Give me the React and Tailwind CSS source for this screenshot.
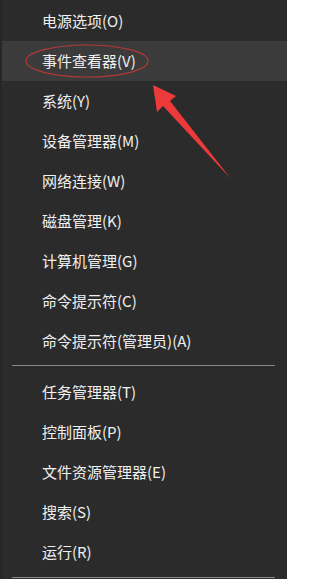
import React from "react";

const group1 = [
  "电源选项(O)",
  "事件查看器(V)",
  "系统(Y)",
  "设备管理器(M)",
  "网络连接(W)",
  "磁盘管理(K)",
  "计算机管理(G)",
  "命令提示符(C)",
  "命令提示符(管理员)(A)",
];
const group2 = [
  "任务管理器(T)",
  "控制面板(P)",
  "文件资源管理器(E)",
  "搜索(S)",
  "运行(R)",
];

function Item({ label, active }) {
  return (
    <div
      className={
        "h-10 flex items-center text-[15px] text-[#f0f0f0] " +
        (active ? "bg-[#3b3b3b] ml-[2px] pl-[40px]" : "pl-[42px]")
      }
    >
      <span>{label}</span>
    </div>
  );
}

export default function App() {
  return (
    <div
      className="relative w-[287px] h-[579px] overflow-hidden bg-[#2b2b2b] pt-[1px]"
      style={{ fontFamily: '"Noto Sans CJK SC", "Noto Sans", sans-serif' }}
    >
      <div className="absolute left-0 top-0 bottom-0 w-[2px] bg-[#262626]" />
      {group1.map((l, i) => (
        <Item key={l} label={l} active={i === 1} />
      ))}
      <div className="mx-[12px] mt-[4px] mb-[6px] h-[1px] bg-[#8a8a8a]" />
      {group2.map((l) => (
        <Item key={l} label={l} />
      ))}
      <div className="mx-[12px] mt-[5px] h-[1px] bg-[#8a8a8a]" />
      <svg
        className="absolute left-0 top-0 pointer-events-none"
        width="287"
        height="579"
        viewBox="0 0 287 579"
      >
        <ellipse
          cx="87"
          cy="61"
          rx="61"
          ry="16"
          fill="none"
          stroke="#b03a3a"
          strokeWidth="1.2"
        />
        <polygon
          points="153,85 176,96 170,101 231,179 163,106 157,112"
          fill="#ec3a3a"
        />
      </svg>
    </div>
  );
}
